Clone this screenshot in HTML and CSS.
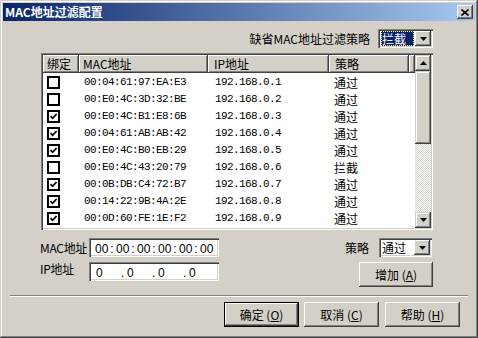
FILE: index.html
```html
<!DOCTYPE html>
<html lang="zh-CN">
<head>
  <meta charset="UTF-8">
  <title>MAC地址过滤配置</title>
  <link rel="stylesheet" href="styles.css">
</head>
<body>
  <div class="window">
    <div class="titlebar">
      <span class="title">MAC地址过滤配置</span>
      <button class="close-btn">
        <svg width="8" height="7" viewBox="0 0 8 7"><path d="M0.5 0.5 L7.5 6.5 M7.5 0.5 L0.5 6.5" stroke="#000" stroke-width="1.6"/></svg>
      </button>
    </div>

    <div class="content">
      <div class="default-row">
        <span class="label">缺省MAC地址过滤策略</span>
        <div class="combo wide">
          <span class="combo-value"><span class="picked">拦截</span></span>
          <span class="combo-btn"><svg width="7" height="4" viewBox="0 0 7 4"><path d="M0 0 H7 L3.5 4 Z" fill="#000"/></svg></span>
        </div>
      </div>

      <div class="listbox">
        <div class="list-main">
          <div class="list-head">
            <div class="hcell col-bind">绑定</div>
            <div class="hcell col-mac">MAC地址</div>
            <div class="hcell col-ip">IP地址</div>
            <div class="hcell col-pol">策略</div>
            <div class="hcell col-fill"></div>
          </div>
          <div class="rows">
            <div class="row"><div class="col-bind"><span class="check"></span></div><div class="col-mac mono">00:04:61:97:EA:E3</div><div class="col-ip mono">192.168.0.1</div><div class="col-pol">通过</div></div>
            <div class="row"><div class="col-bind"><span class="check"></span></div><div class="col-mac mono">00:E0:4C:3D:32:BE</div><div class="col-ip mono">192.168.0.2</div><div class="col-pol">通过</div></div>
            <div class="row"><div class="col-bind"><span class="check on"></span></div><div class="col-mac mono">00:E0:4C:B1:E8:6B</div><div class="col-ip mono">192.168.0.3</div><div class="col-pol">通过</div></div>
            <div class="row"><div class="col-bind"><span class="check on"></span></div><div class="col-mac mono">00:04:61:AB:AB:42</div><div class="col-ip mono">192.168.0.4</div><div class="col-pol">通过</div></div>
            <div class="row"><div class="col-bind"><span class="check on"></span></div><div class="col-mac mono">00:E0:4C:B0:EB:29</div><div class="col-ip mono">192.168.0.5</div><div class="col-pol">通过</div></div>
            <div class="row"><div class="col-bind"><span class="check"></span></div><div class="col-mac mono">00:E0:4C:43:20:79</div><div class="col-ip mono">192.168.0.6</div><div class="col-pol">拦截</div></div>
            <div class="row"><div class="col-bind"><span class="check on"></span></div><div class="col-mac mono">00:0B:DB:C4:72:B7</div><div class="col-ip mono">192.168.0.7</div><div class="col-pol">通过</div></div>
            <div class="row"><div class="col-bind"><span class="check on"></span></div><div class="col-mac mono">00:14:22:9B:4A:2E</div><div class="col-ip mono">192.168.0.8</div><div class="col-pol">通过</div></div>
            <div class="row"><div class="col-bind"><span class="check on"></span></div><div class="col-mac mono">00:0D:60:FE:1E:F2</div><div class="col-ip mono">192.168.0.9</div><div class="col-pol">通过</div></div>
          </div>
        </div>
        <div class="scrollbar">
          <div class="sb-btn"><svg width="7" height="4" viewBox="0 0 7 4"><path d="M0 4 H7 L3.5 0 Z" fill="#000"/></svg></div>
          <div class="sb-thumb"></div>
          <div class="sb-track"></div>
          <div class="sb-btn"><svg width="7" height="4" viewBox="0 0 7 4"><path d="M0 0 H7 L3.5 4 Z" fill="#000"/></svg></div>
        </div>
      </div>

      <div class="edit-area">
        <div class="fields">
          <div class="field-row">
            <span class="field-label">MAC地址</span>
            <div class="field mac-field">
              <span>00</span><i>:</i><span>00</span><i>:</i><span>00</span><i>:</i><span>00</span><i>:</i><span>00</span><i>:</i><span>00</span>
            </div>
          </div>
          <div class="field-row">
            <span class="field-label ip-label">IP地址</span>
            <div class="field ip-field">
              <span>0</span><i>.</i><span>0</span><i>.</i><span>0</span><i>.</i><span>0</span>
            </div>
          </div>
        </div>
        <div class="side">
          <div class="side-row">
            <span class="label">策略</span>
            <div class="combo small">
              <span class="combo-value">通过</span>
              <span class="combo-btn"><svg width="7" height="4" viewBox="0 0 7 4"><path d="M0 0 H7 L3.5 4 Z" fill="#000"/></svg></span>
            </div>
          </div>
          <button class="btn add-btn">增加 (<u>A</u>)</button>
        </div>
      </div>
    </div>

    <div class="separator"></div>

    <div class="buttons">
      <button class="btn default">确定 (<u>O</u>)</button>
      <button class="btn">取消 (<u>C</u>)</button>
      <button class="btn help">帮助 (<u>H</u>)</button>
    </div>
  </div>
</body>
</html>
```

FILE: styles.css
```css
/* General */
body {
  margin: 0;
  font-family: "Noto Sans CJK SC", "DejaVu Sans", sans-serif;
  font-size: 12px;
  color: #000;
  background: #d4d0c8;
}

.window {
  width: 478px;
  height: 338px;
  box-sizing: border-box;
  padding: 3px;
  background: #d4d0c8;
  box-shadow: inset -1px -1px #404040, inset 1px 1px #d4d0c8,
              inset -2px -2px #808080, inset 2px 2px #fff;
}

/* Title bar */
.titlebar {
  height: 18px;
  display: flex;
  align-items: center;
  justify-content: space-between;
  padding: 0 2px 0 2px;
  background: linear-gradient(to right, #0a246a, #a6caf0);
}

.title {
  color: #fff;
  font-weight: bold;
  font-size: 12px;
  line-height: 18px;
}

.close-btn {
  width: 16px;
  height: 14px;
  padding: 0;
  border: none;
  background: #d4d0c8;
  display: flex;
  align-items: center;
  justify-content: center;
  box-shadow: inset -1px -1px #404040, inset 1px 1px #fff,
              inset -2px -2px #808080, inset 2px 2px #d4d0c8;
}

/* Content */
.content {
  padding: 8px 42px 0 38px;
}

.default-row {
  display: flex;
  justify-content: flex-end;
  align-items: center;
  height: 19px;
  gap: 8px;
}

.label {
  line-height: 19px;
}

/* Combo box */
.combo {
  height: 19px;
  box-sizing: border-box;
  display: flex;
  align-items: center;
  padding: 2px;
  background: #fff;
  box-shadow: inset 1px 1px #808080, inset 2px 2px #404040,
              inset -1px -1px #fff, inset -2px -2px #d4d0c8;
}

.combo.wide {
  width: 55px;
}

.combo.small {
  width: 53px;
}

.combo-value {
  flex: 1;
  height: 15px;
  line-height: 15px;
  padding-left: 1px;
}

.picked {
  display: block;
  margin-right: 1px;
  padding-left: 1px;
  height: 15px;
  background: #0a246a;
  color: #fff;
  outline: 1px dotted #ffff80;
  outline-offset: -1px;
}

.combo-btn {
  width: 16px;
  height: 15px;
  display: flex;
  align-items: center;
  justify-content: center;
  background: #d4d0c8;
  box-shadow: inset -1px -1px #404040, inset 1px 1px #fff,
              inset -2px -2px #808080, inset 2px 2px #d4d0c8;
}

/* List */
.listbox {
  margin-top: 5px;
  height: 177px;
  box-sizing: border-box;
  padding: 2px;
  display: flex;
  background: #fff;
  box-shadow: inset 1px 1px #808080, inset 2px 2px #404040,
              inset -1px -1px #fff, inset -2px -2px #d4d0c8;
}

.list-main {
  flex: 1;
  overflow: hidden;
}

.list-head {
  display: flex;
  height: 18px;
}

.hcell {
  box-sizing: border-box;
  height: 18px;
  line-height: 18px;
  padding-left: 4px;
  background: #d4d0c8;
  box-shadow: inset -1px -1px #404040, inset 1px 1px #fff,
              inset -2px -2px #808080;
}

.col-bind { width: 36px; flex: none; }
.col-mac { width: 129px; flex: none; }
.col-ip { width: 121px; flex: none; }
.col-pol { width: 80px; flex: none; }
.col-fill { flex: 1; }

.list-head .col-mac { padding-left: 4px; }
.list-head .col-ip { padding-left: 6px; }
.list-head .col-pol { padding-left: 6px; }

.rows {
  padding-top: 1px;
}

.row {
  display: flex;
  height: 17px;
  line-height: 17px;
  align-items: center;
}

.row .col-bind {
  padding-left: 4px;
  box-sizing: border-box;
  display: flex;
}

.row .col-mac { padding-left: 5px; box-sizing: border-box; }
.row .col-ip { padding-left: 7px; box-sizing: border-box; }
.row .col-pol { padding-left: 5px; box-sizing: border-box; }

.mono {
  font-family: "Liberation Mono", monospace;
  font-size: 11px;
  letter-spacing: -0.6px;
}

.check {
  width: 13px;
  height: 13px;
  box-sizing: border-box;
  border: 2px solid #000;
  background: #fff;
}

.check.on {
  background: #fff url("data:image/svg+xml;utf8,<svg xmlns='http://www.w3.org/2000/svg' width='9' height='9' viewBox='0 0 9 9'><path d='M1.5 4.2 L3.6 6.3 L7.6 2' fill='none' stroke='black' stroke-width='1.8'/></svg>") center / 9px 9px no-repeat;
}

/* Scrollbar */
.scrollbar {
  width: 16px;
  display: flex;
  flex-direction: column;
}

.sb-btn {
  height: 16px;
  flex: none;
  display: flex;
  align-items: center;
  justify-content: center;
  background: #d4d0c8;
  box-shadow: inset -1px -1px #404040, inset 1px 1px #d4d0c8,
              inset -2px -2px #808080, inset 2px 2px #fff;
}

.sb-thumb {
  height: 73px;
  flex: none;
  background: #d4d0c8;
  box-shadow: inset -1px -1px #404040, inset 1px 1px #d4d0c8,
              inset -2px -2px #808080, inset 2px 2px #fff;
}

.sb-track {
  flex: 1;
  background-image: conic-gradient(#d4d0c8 25%, #fff 0 50%, #d4d0c8 0 75%, #fff 0);
  background-size: 2px 2px;
}

/* Edit area */
.edit-area {
  margin-top: 8px;
  display: flex;
  justify-content: space-between;
}

.fields {
  display: flex;
  flex-direction: column;
  gap: 5px;
  margin-left: -1px;
}

.field-row {
  display: flex;
  align-items: center;
  height: 19px;
}

.field-label {
  width: 49px;
  flex: none;
  white-space: nowrap;
  letter-spacing: -0.3px;
}

.ip-label {
  position: relative;
  top: -3px;
}

.field {
  width: 130px;
  flex: none;
  height: 19px;
  box-sizing: border-box;
  padding: 2px 0 0 7px;
  display: flex;
  align-items: center;
  font-family: "Liberation Sans", Arial, sans-serif;
  font-size: 12px;
  background: #fff;
  box-shadow: inset 1px 1px #808080, inset 2px 2px #404040,
              inset -1px -1px #fff, inset -2px -2px #d4d0c8;
}

.field i {
  font-style: normal;
  width: 8px;
  text-align: center;
}

.mac-field span {
  width: 13px;
}

.mac-field {
  padding-left: 6px;
}

.ip-field span {
  width: 25px;
}

.ip-field i {
  width: 6px;
  text-align: left;
}

.side {
  display: flex;
  flex-direction: column;
  align-items: flex-end;
  gap: 5px;
}

.side-row {
  display: flex;
  align-items: center;
  gap: 10px;
  margin-right: 1px;
}

/* Buttons */
.btn {
  width: 75px;
  height: 25px;
  box-sizing: border-box;
  border: none;
  padding: 0;
  font-family: "Noto Sans CJK SC", sans-serif;
  font-size: 12px;
  color: #000;
  background: #d4d0c8;
  box-shadow: inset -1px -1px #404040, inset 1px 1px #fff,
              inset -2px -2px #808080, inset 2px 2px #d4d0c8;
}

.add-btn {
  width: 74px;
}

.btn.default {
  border: 1px solid #000;
}

.separator {
  margin: 8px 7px 0 7px;
  height: 1px;
  background: #808080;
  border-bottom: 1px solid #fff;
}

.buttons {
  display: flex;
  justify-content: flex-end;
  gap: 5px;
  margin-top: 5px;
  padding-right: 15px;
}

.help {
  margin-left: 1px;
}
```
